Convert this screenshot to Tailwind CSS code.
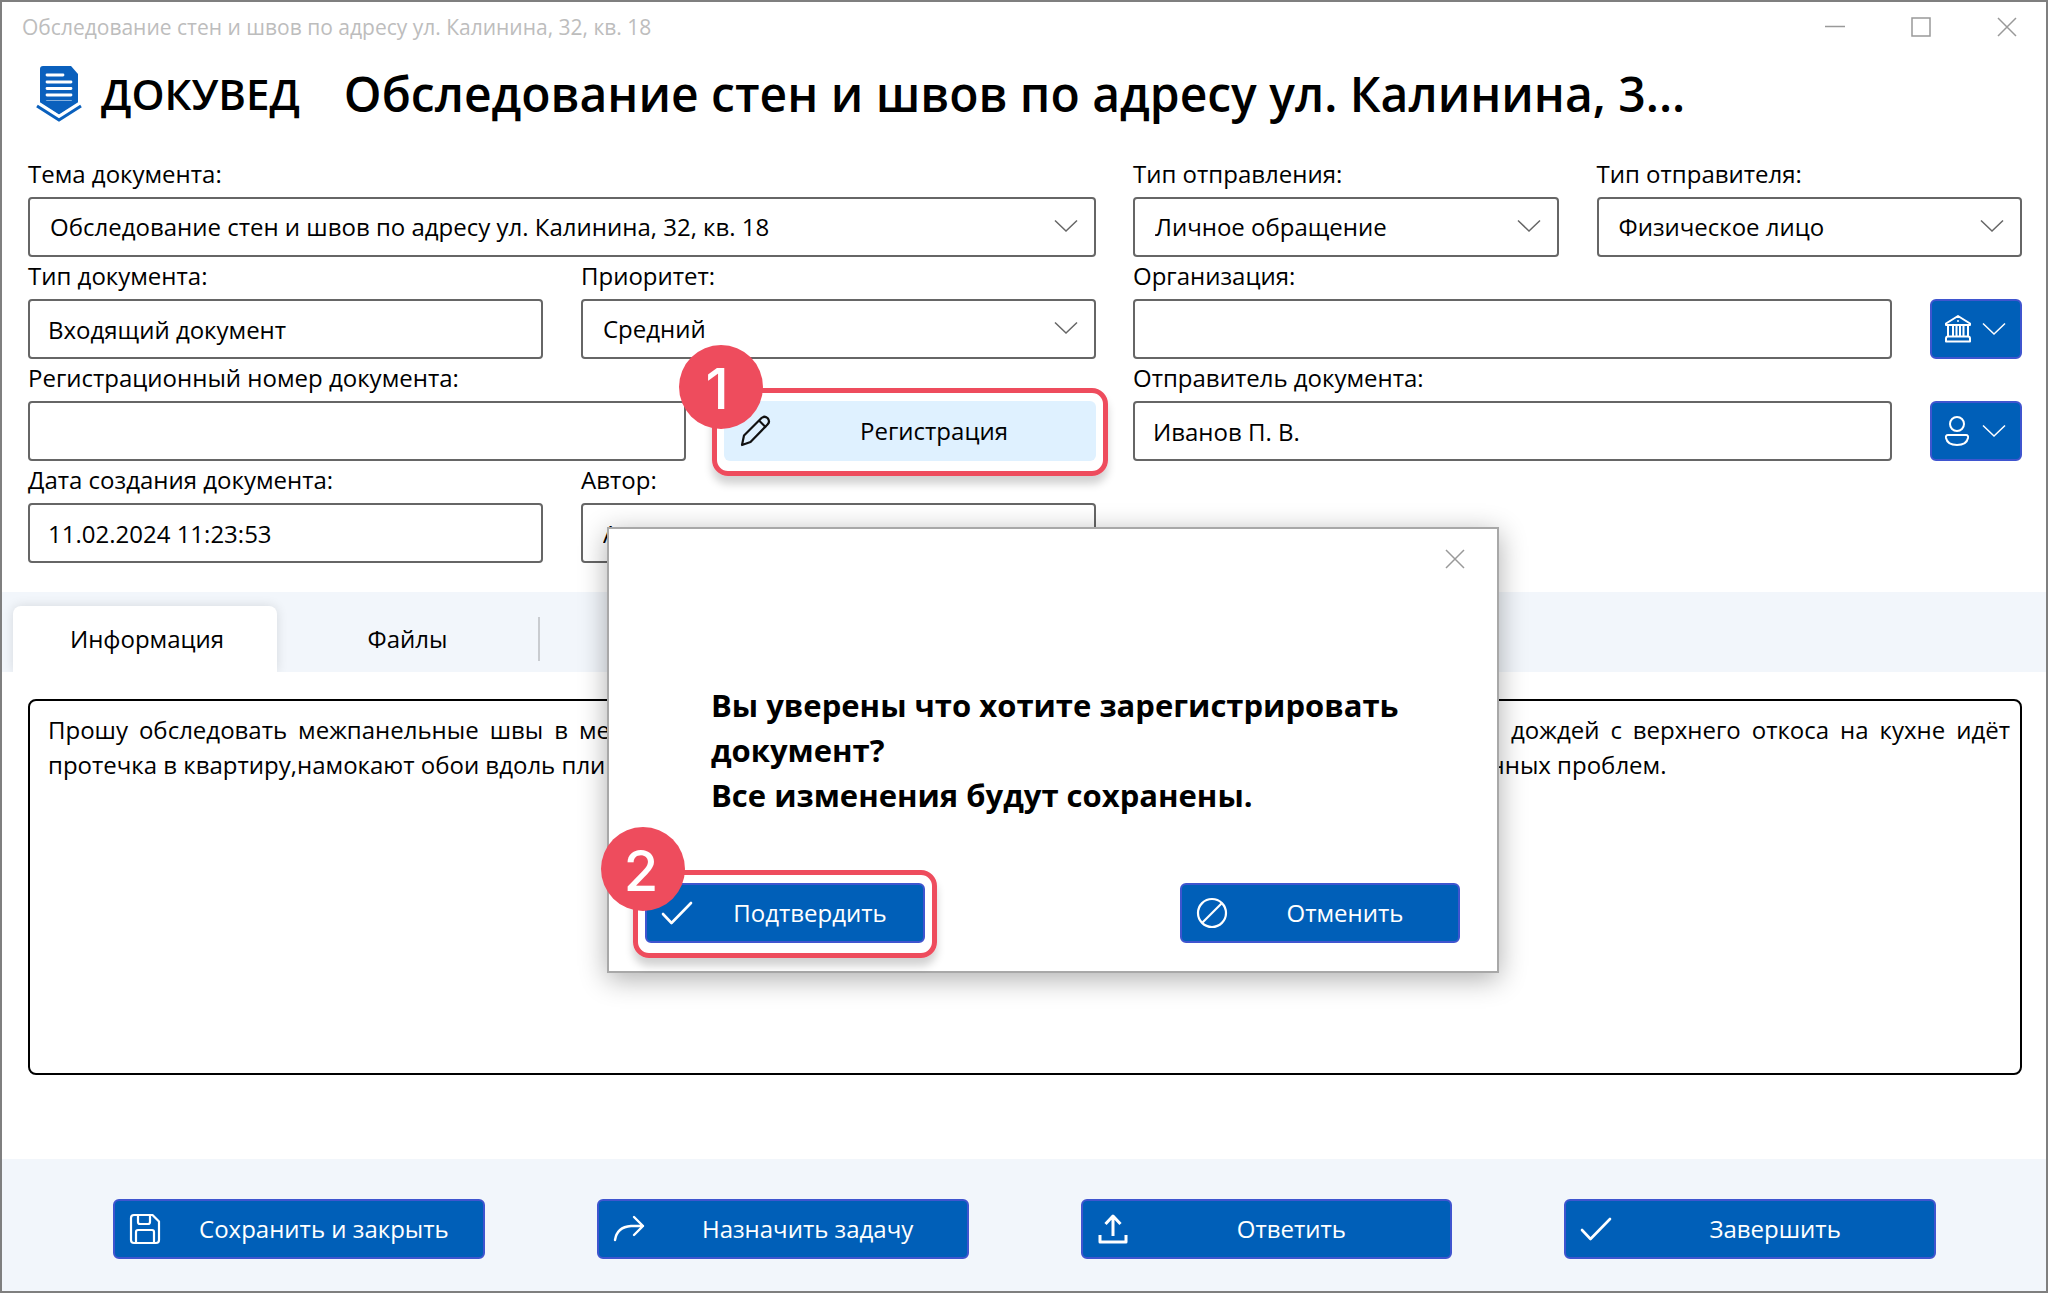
<!DOCTYPE html>
<html lang="ru">
<head>
<meta charset="utf-8">
<title>Обследование стен и швов по адресу ул. Калинина, 32, кв. 18</title>
<script src="https://cdn.jsdelivr.net/npm/@tailwindcss/browser@4"></script>
</head>
<body class="bg-white text-black font-['Open_Sans','Noto_Sans',sans-serif] text-[24px] leading-[32px]">
<svg class="hidden" aria-hidden="true">
  <symbol id="chevron" viewBox="0 0 24 14"><path d="M1 1.500l11 10.500l11-10.500" fill="none" stroke="currentColor" stroke-width="1.500"/></symbol>
  <symbol id="check" viewBox="0 0 32 26"><path d="M2 14l8.500 9L30 3" fill="none" stroke="currentColor" stroke-width="2.600" stroke-linecap="round" stroke-linejoin="round"/></symbol>
</svg>
<div class="relative flex min-h-screen flex-col border-2 border-[#7f7f7f]">

  <header>
    <div class="flex h-[50px] items-center justify-between pl-5 pr-[29px]">
      <span class="text-[21px] leading-[32px] text-[#bdbdbd]">Обследование стен и швов по адресу ул. Калинина, 32, кв. 18</span>
      <div class="flex gap-[66px] text-[#999]">
        <button class="size-5" aria-label="Свернуть"><svg viewBox="0 0 20 20" class="size-5"><path d="M0 9.500h20" stroke="currentColor" stroke-width="1.500"/></svg></button>
        <button class="size-5" aria-label="Развернуть"><svg viewBox="0 0 20 20" class="size-5"><path d="M1 1h18v18h-18z" fill="none" stroke="currentColor" stroke-width="1.500"/></svg></button>
        <button class="size-5" aria-label="Закрыть окно"><svg viewBox="0 0 20 20" class="size-5"><path d="M1 1l18 18M19 1l-18 18" stroke="currentColor" stroke-width="1.500"/></svg></button>
      </div>
    </div>
    <div class="flex h-[84px] items-center pl-[34px]">
      <svg viewBox="0 0 46 58" class="h-[58px] w-[46px] shrink-0">
        <path d="M7 1h28l7 8v30L23 51L4 39V4q0-3 3-3z" fill="#0a60bd"/>
        <path d="M11 10h16M11 17h24M11 23.500h24M11 30h24M11 37h24" stroke="#fff" stroke-width="2.800" stroke-linecap="round"/>
        <path d="M1 40l22 14l22-14" fill="none" stroke="#fff" stroke-width="8"/>
        <path d="M1 41l22 14l22-14" fill="none" stroke="#0a60bd" stroke-width="3"/>
        <path d="M4 36l19 13l19-13" fill="#0a60bd"/>
      </svg>
      <span class="ml-[19px] text-[42px] leading-[60px] font-semibold">ДОКУВЕД</span>
      <h1 class="ml-[44px] text-[48px] leading-[60px] font-semibold">Обследование стен и швов по адресу ул. Калинина, 3...</h1>
    </div>
  </header>

  <main class="flex grow flex-col">
    <form class="mt-[19px] grid grid-cols-[1068fr_889fr] gap-x-[37px] pl-[26px] pr-6">
      <div class="grid grid-cols-2 gap-x-[38px]">
        <div class="col-span-2">
          <label for="topic" class="block h-[42px] pt-[3px]">Тема документа:</label>
          <div class="relative">
            <select id="topic" class="h-[60px] w-full appearance-none rounded-sm border-2 border-[#666] bg-white px-5"><option>Обследование стен и швов по адресу ул. Калинина, 32, кв. 18</option></select>
            <svg class="pointer-events-none absolute top-[22px] right-[18px] h-[14px] w-6 text-[#666]"><use href="#chevron"/></svg>
          </div>
        </div>
        <div>
          <label for="doctype" class="block h-[42px] pt-[3px]">Тип документа:</label>
          <input id="doctype" value="Входящий документ" class="h-[60px] w-full rounded-sm border-2 border-[#666] px-[18px]">
        </div>
        <div>
          <label for="priority" class="block h-[42px] pt-[3px]">Приоритет:</label>
          <div class="relative">
            <select id="priority" class="h-[60px] w-full appearance-none rounded-sm border-2 border-[#666] bg-white px-5"><option>Средний</option></select>
            <svg class="pointer-events-none absolute top-[22px] right-[18px] h-[14px] w-6 text-[#666]"><use href="#chevron"/></svg>
          </div>
        </div>
        <div class="col-span-2 flex items-end gap-[38px]">
          <div class="grow">
            <label for="regnum" class="block h-[42px] pt-[3px]">Регистрационный номер документа:</label>
            <input id="regnum" class="h-[60px] w-full rounded-sm border-2 border-[#666] px-[18px]">
          </div>
          <div class="relative w-[372px] shrink-0">
            <button type="button" class="flex h-[60px] w-full items-center rounded-md bg-[#dff1ff] pr-5 pl-4">
              <svg viewBox="0 0 32 32" class="size-8" fill="none" stroke="#111" stroke-width="2.200" stroke-linejoin="round"><path d="M2 30l2-9.500L21.500 3q3-2.500 6 0q3 3.500 0 6.500L10.500 27z"/><path d="M19 5.500l7 7"/></svg>
              <span class="grow pl-5 text-center">Регистрация</span>
            </button>
            <div class="pointer-events-none absolute -inset-x-[12px] -top-[13px] -bottom-[15px] rounded-2xl border-[5px] border-[#ee4c5d] shadow-[0_8px_8px_rgba(0,0,0,0.18)]"></div>
            <span class="absolute -top-[56px] -left-[45px] flex size-[84px] items-center justify-center rounded-full bg-[#ee4c5d] pt-1 pr-2 font-['Inter',sans-serif] text-[56px] leading-none font-medium text-white">1</span>
          </div>
        </div>
        <div>
          <label for="created" class="block h-[42px] pt-[3px]">Дата создания документа:</label>
          <input id="created" value="11.02.2024 11:23:53" class="h-[60px] w-full rounded-sm border-2 border-[#666] px-[18px]">
        </div>
        <div>
          <label for="author" class="block h-[42px] pt-[3px]">Автор:</label>
          <input id="author" value="Администратор" class="h-[60px] w-full rounded-sm border-2 border-[#666] px-5">
        </div>
      </div>

      <div class="grid grid-cols-2 content-start gap-x-[38px]">
        <div>
          <label for="sendtype" class="block h-[42px] pt-[3px]">Тип отправления:</label>
          <div class="relative">
            <select id="sendtype" class="h-[60px] w-full appearance-none rounded-sm border-2 border-[#666] bg-white px-5"><option>Личное обращение</option></select>
            <svg class="pointer-events-none absolute top-[22px] right-[18px] h-[14px] w-6 text-[#666]"><use href="#chevron"/></svg>
          </div>
        </div>
        <div>
          <label for="sendertype" class="block h-[42px] pt-[3px]">Тип отправителя:</label>
          <div class="relative">
            <select id="sendertype" class="h-[60px] w-full appearance-none rounded-sm border-2 border-[#666] bg-white px-5"><option>Физическое лицо</option></select>
            <svg class="pointer-events-none absolute top-[22px] right-[18px] h-[14px] w-6 text-[#666]"><use href="#chevron"/></svg>
          </div>
        </div>
        <div class="col-span-2 flex items-end gap-[38px]">
          <div class="grow">
            <label for="org" class="block h-[42px] pt-[3px]">Организация:</label>
            <input id="org" class="h-[60px] w-full rounded-sm border-2 border-[#666] px-[18px]">
          </div>
          <button type="button" aria-label="Выбрать организацию" class="flex h-[60px] w-[92px] shrink-0 items-center gap-2.5 rounded-md border-2 border-[#3f55cf] bg-[#005fb8] pl-3 text-white">
            <svg viewBox="0 0 28 30" class="h-[30px] w-7" fill="none" stroke="currentColor" stroke-width="2" stroke-linejoin="round"><path d="M2 11v-1.500L14 2l12 7.500V11zM4 11v11M9 11v11M12.500 11v11M16 11v11M19.500 11v11M24 11v11M2 27.500v-3q0-2 2-2h20q2 0 2 2v3z"/><circle cx="14" cy="7" r="1" fill="currentColor" stroke="none"/></svg>
            <svg class="h-[14px] w-6"><use href="#chevron"/></svg>
          </button>
        </div>
        <div class="col-span-2 flex items-end gap-[38px]">
          <div class="grow">
            <label for="sender" class="block h-[42px] pt-[3px]">Отправитель документа:</label>
            <input id="sender" value="Иванов П. В." class="h-[60px] w-full rounded-sm border-2 border-[#666] px-[18px]">
          </div>
          <button type="button" aria-label="Выбрать отправителя" class="flex h-[60px] w-[92px] shrink-0 items-center gap-2.5 rounded-md border-2 border-[#3f55cf] bg-[#005fb8] pl-3 text-white">
            <svg viewBox="0 0 28 30" class="h-[30px] w-7" fill="none" stroke="currentColor" stroke-width="2" stroke-linejoin="round"><circle cx="13" cy="8" r="7"/><path d="M4 19h18q2.500 0 2 3q-1.500 7-11 7t-11-7q-.5-3 2-3z"/></svg>
            <svg class="h-[14px] w-6"><use href="#chevron"/></svg>
          </button>
        </div>
      </div>
    </form>

    <nav class="mt-[29px] flex h-[80px] items-end overflow-hidden bg-[#f2f6fb] pl-[11px]">
      <button class="h-[66px] w-[264px] rounded-t-lg bg-white pl-1 shadow-[0_0_12px_rgba(0,0,0,0.12)]">Информация</button>
      <button class="h-[66px] w-[261px]">Файлы</button>
      <span class="mb-[11px] h-[44px] w-[2px] bg-[#c9ccd0]"></span>
    </nav>

    <div class="mt-[27px] flex pr-6 pl-[26px]">
      <textarea aria-label="Информация" class="h-[376px] w-full resize-none rounded-lg border-2 border-black py-[11px] pr-[10px] pl-[18px] text-justify leading-[35px]">Прошу обследовать межпанельные швы в местах примыкания плит к наружной стене по адресу Калинина, во время дождей с верхнего откоса на кухне идёт протечка в квартиру,намокают обои вдоль плинтуса и оконного проёма. Прошу принять меры по устранению вышеуказанных проблем.</textarea>
    </div>
  </main>

  <footer class="grid h-[132px] grid-cols-4 items-center gap-x-[112px] bg-[#f2f6fb] pt-2 pr-[110px] pl-[111px]">
    <button class="flex h-[60px] items-center rounded-md border-2 border-[#3f55cf] bg-[#005fb8] px-3.5 text-white">
      <svg viewBox="0 0 32 32" class="size-8" fill="none" stroke="currentColor" stroke-width="2.200" stroke-linejoin="round"><path d="M5 2h18.500L30 8.500V27q0 3-3 3H5q-3 0-3-3V5q0-3 3-3zM7 30V19q0-2 2-2h14q2 0 2 2v11M9 2v7q0 2 2 2h8q2 0 2-2V2"/></svg>
      <span class="grow pl-[18px] text-center">Сохранить и закрыть</span>
    </button>
    <button class="flex h-[60px] items-center rounded-md border-2 border-[#3f55cf] bg-[#005fb8] px-3.5 text-white">
      <svg viewBox="0 0 32 32" class="size-8" fill="none" stroke="currentColor" stroke-width="2.400" stroke-linecap="round" stroke-linejoin="round"><path d="M2 27q2-13 16-14h12M21 4l9 9l-9 9"/></svg>
      <span class="grow pl-[18px] text-center">Назначить задачу</span>
    </button>
    <button class="flex h-[60px] items-center rounded-md border-2 border-[#3f55cf] bg-[#005fb8] px-3.5 text-white">
      <svg viewBox="0 0 32 32" class="size-8" fill="none" stroke="currentColor" stroke-width="3" stroke-linejoin="round"><path d="M16 23V4M8.500 11L16 3l7.500 8M3 22v7h26v-7"/></svg>
      <span class="grow pl-[18px] text-center">Ответить</span>
    </button>
    <button class="flex h-[60px] items-center rounded-md border-2 border-[#3f55cf] bg-[#005fb8] px-3.5 text-white">
      <svg class="h-[26px] w-8"><use href="#check"/></svg>
      <span class="grow pl-[18px] text-center">Завершить</span>
    </button>
  </footer>

  <div role="dialog" aria-label="Подтверждение регистрации" class="absolute top-[525px] left-[605px] flex w-[892px] flex-col border-2 border-[#a8a8a8] bg-white pb-[28px] shadow-[0_6px_26px_rgba(0,0,0,0.32)]">
    <div class="flex h-[59px] items-center justify-end pr-[32px]">
      <button class="size-5 text-[#999]" aria-label="Закрыть"><svg viewBox="0 0 20 20" class="size-5"><path d="M1 1l18 18M19 1l-18 18" stroke="currentColor" stroke-width="1.500"/></svg></button>
    </div>
    <p class="mt-[95px] pr-16 pl-[102px] text-[31px] leading-[45px] font-bold">Вы уверены что хотите зарегистрировать документ?<br>Все изменения будут сохранены.</p>
    <div class="mt-[65px] flex justify-between pr-[37px] pl-[36px]">
      <div class="relative w-[280px]">
        <button class="flex h-[60px] w-full items-center rounded-md border-2 border-[#3f55cf] bg-[#005fb8] px-3.5 text-white">
          <svg class="h-[26px] w-8"><use href="#check"/></svg>
          <span class="grow pl-[18px] text-center">Подтвердить</span>
        </button>
        <div class="pointer-events-none absolute -inset-x-[12px] -top-[13px] -bottom-[15px] rounded-2xl border-[5px] border-[#ee4c5d] shadow-[0_8px_8px_rgba(0,0,0,0.18)]"></div>
        <span class="absolute -top-[56px] -left-[44px] flex size-[84px] items-center justify-center rounded-full bg-[#ee4c5d] pt-1 pr-1 font-['Inter',sans-serif] text-[56px] leading-none font-medium text-white">2</span>
      </div>
      <button class="flex h-[60px] w-[280px] items-center rounded-md border-2 border-[#3f55cf] bg-[#005fb8] px-3.5 text-white">
        <svg viewBox="0 0 32 32" class="size-8" fill="none" stroke="currentColor" stroke-width="2.200"><circle cx="16" cy="16" r="14"/><path d="M6.500 25.500l19-19"/></svg>
        <span class="grow pl-[18px] text-center">Отменить</span>
      </button>
    </div>
  </div>
</div>
</body>
</html>
